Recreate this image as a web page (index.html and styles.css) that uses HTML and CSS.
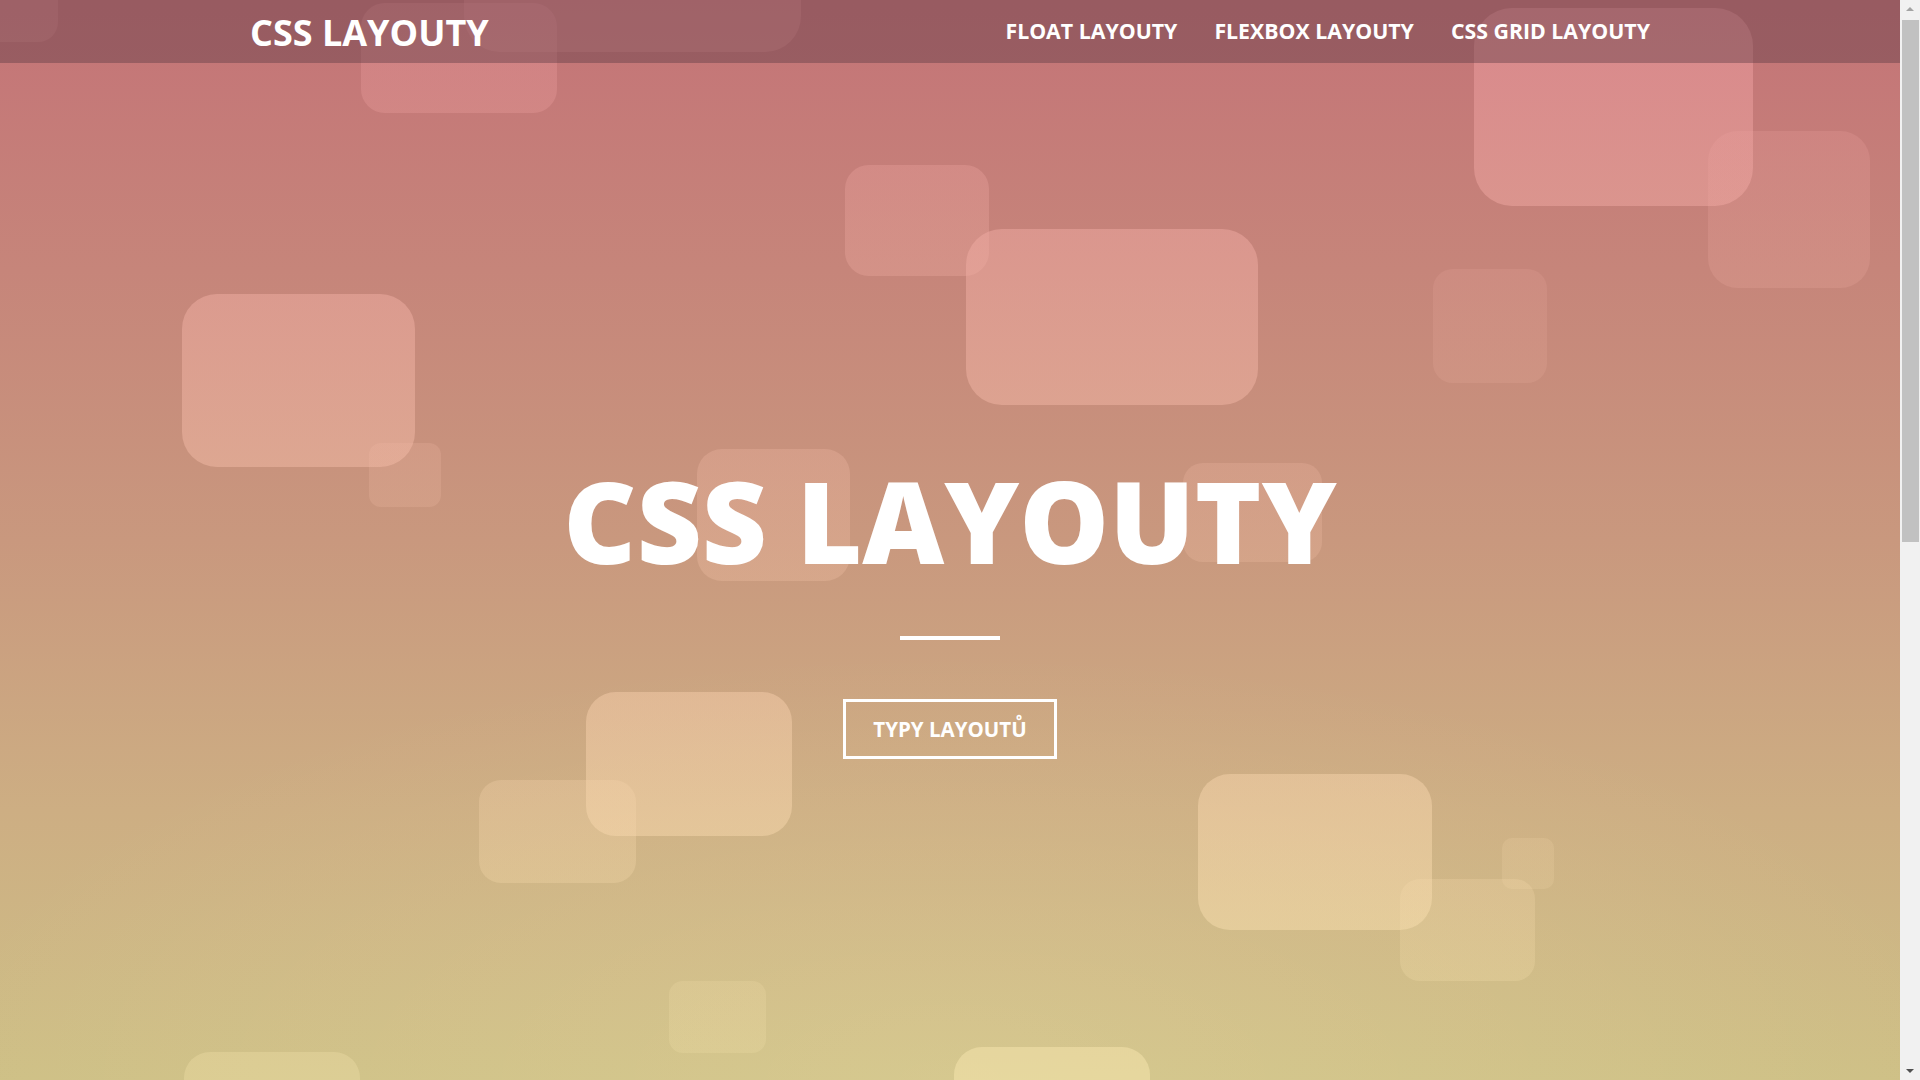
FILE: index.html
```html
<!DOCTYPE html>
<html lang="cs">
<head>
<meta charset="utf-8">
<title>CSS Layouty</title>
<link rel="stylesheet" href="styles.css">
</head>
<body>
<div class="window">
  <header class="hero">
    <div class="shapes" aria-hidden="true">
      <span class="sq" style="left:-80px;top:-60px;width:138px;height:102px;border-radius:20px;opacity:.25"></span>
      <span class="sq" style="left:361px;top:3px;width:196px;height:110px;border-radius:24px;opacity:.3"></span>
      <span class="sq" style="left:464px;top:-120px;width:337px;height:172px;border-radius:36px;opacity:.3"></span>
      <span class="sq" style="left:1474px;top:8px;width:279px;height:198px;border-radius:38px;opacity:.5"></span>
      <span class="sq" style="left:1708px;top:131px;width:162px;height:157px;border-radius:30px;opacity:.22"></span>
      <span class="sq" style="left:845px;top:165px;width:144px;height:111px;border-radius:24px;opacity:.32"></span>
      <span class="sq" style="left:966px;top:229px;width:292px;height:176px;border-radius:36px;opacity:.5"></span>
      <span class="sq" style="left:1433px;top:269px;width:114px;height:114px;border-radius:20px;opacity:.17"></span>
      <span class="sq" style="left:182px;top:294px;width:233px;height:173px;border-radius:35px;opacity:.5"></span>
      <span class="sq" style="left:369px;top:443px;width:72px;height:64px;border-radius:12px;opacity:.22"></span>
      <span class="sq" style="left:697px;top:449px;width:153px;height:132px;border-radius:25px;opacity:.3"></span>
      <span class="sq" style="left:1183px;top:463px;width:139px;height:99px;border-radius:20px;opacity:.25"></span>
      <span class="sq" style="left:586px;top:692px;width:206px;height:144px;border-radius:30px;opacity:.5"></span>
      <span class="sq" style="left:479px;top:780px;width:157px;height:103px;border-radius:22px;opacity:.3"></span>
      <span class="sq" style="left:1198px;top:774px;width:234px;height:156px;border-radius:32px;opacity:.5"></span>
      <span class="sq" style="left:1400px;top:879px;width:135px;height:102px;border-radius:20px;opacity:.25"></span>
      <span class="sq" style="left:1502px;top:838px;width:52px;height:51px;border-radius:10px;opacity:.18"></span>
      <span class="sq" style="left:669px;top:981px;width:97px;height:72px;border-radius:14px;opacity:.2"></span>
      <span class="sq" style="left:184px;top:1052px;width:176px;height:100px;border-radius:26px;opacity:.3"></span>
      <span class="sq" style="left:954px;top:1047px;width:196px;height:110px;border-radius:28px;opacity:.5"></span>
    </div>

    <nav class="navbar">
      <div class="container nav-inner">
        <a class="logo" href="#">CSS LAYOUTY</a>
        <ul class="nav-links">
          <li><a href="#">FLOAT LAYOUTY</a></li>
          <li><a href="#">FLEXBOX LAYOUTY</a></li>
          <li><a href="#">CSS GRID LAYOUTY</a></li>
        </ul>
      </div>
    </nav>

    <div class="hero-content">
      <h1 class="hero-title">CSS LAYOUTY</h1>
      <div class="divider"></div>
      <a class="btn-outline" href="#">TYPY LAYOUTŮ</a>
    </div>
  </header>

  <div class="scrollbar" aria-hidden="true">
    <span class="sb-arrow sb-up"></span>
    <span class="sb-thumb"></span>
    <span class="sb-track"></span>
    <span class="sb-arrow sb-down"></span>
  </div>
</div>
</body>
</html>
```
FILE: styles.css
```css
* { box-sizing: border-box; }

html, body {
  margin: 0;
  padding: 0;
  height: 100%;
  overflow: hidden;
}

body {
  font-family: "Open Sans", "Liberation Sans", sans-serif;
  color: #fff;
  background: #f1f1f1;
}

a { color: inherit; text-decoration: none; }

.window {
  display: flex;
  height: 1080px;
}

.container {
  width: 1400px;
  margin: 0 auto;
}

.hero {
  position: relative;
  flex: 1;
  height: 1080px;
  overflow: hidden;
  display: flex;
  flex-direction: column;
  background:
    radial-gradient(ellipse 55% 40% at 50% 100%, rgba(255, 245, 190, 0.16), rgba(255, 245, 190, 0) 100%),
    linear-gradient(to bottom, #c47377 0%, #c6857a 25%, #c9987e 50%, #cdae83 75%, #cec086 100%);
}

.shapes {
  position: absolute;
  inset: 0;
  z-index: 0;
}

.sq {
  position: absolute;
  display: block;
  background: linear-gradient(to bottom, #ee9ba0 0%, #f0ada3 25%, #f3c0a7 50%, #f7d6ac 75%, #f8e8af 100%);
  background-attachment: fixed;
}

.navbar {
  position: relative;
  z-index: 2;
  height: 63px;
  background: rgba(88, 56, 66, 0.4);
}

.nav-inner {
  height: 100%;
  display: flex;
  align-items: center;
  justify-content: space-between;
}

.logo {
  font-size: 36px;
  font-weight: 700;
  line-height: 1;
  margin-top: 2px;
}

.nav-links {
  list-style: none;
  margin: 0;
  padding: 0;
  display: flex;
  gap: 37px;
}

.nav-links a {
  font-size: 21.3px;
  font-weight: 700;
  line-height: 1;
}

.hero-content {
  position: relative;
  z-index: 1;
  flex: 1;
  display: flex;
  flex-direction: column;
  align-items: center;
  padding-top: 401px;
}

.hero-title {
  margin: 0;
  font-size: 113px;
  font-weight: 800;
  line-height: 1;
}

.divider {
  width: 100px;
  height: 4px;
  background: #fff;
  margin-top: 59px;
}

.btn-outline {
  margin-top: 59px;
  display: inline-block;
  border: 3px solid #fff;
  padding: 15px 27px;
  font-size: 20.5px;
  font-weight: 700;
  line-height: 24px;
}

/* window scrollbar */
.scrollbar {
  width: 20px;
  height: 1080px;
  background: #f1f1f1;
  display: flex;
  flex-direction: column;
  align-items: center;
  flex-shrink: 0;
}

.sb-arrow {
  width: 0;
  height: 0;
  border-left: 4px solid transparent;
  border-right: 4px solid transparent;
  flex-shrink: 0;
}

.sb-up {
  border-bottom: 4px solid #a3a3a3;
  margin-top: 7px;
  margin-bottom: 9px;
}

.sb-down {
  border-top: 4px solid #505050;
  margin-top: 9px;
  margin-bottom: 7px;
}

.sb-thumb {
  width: 17px;
  height: 522px;
  background: #c1c1c1;
  flex-shrink: 0;
}

.sb-track {
  flex: 1;
}
```
